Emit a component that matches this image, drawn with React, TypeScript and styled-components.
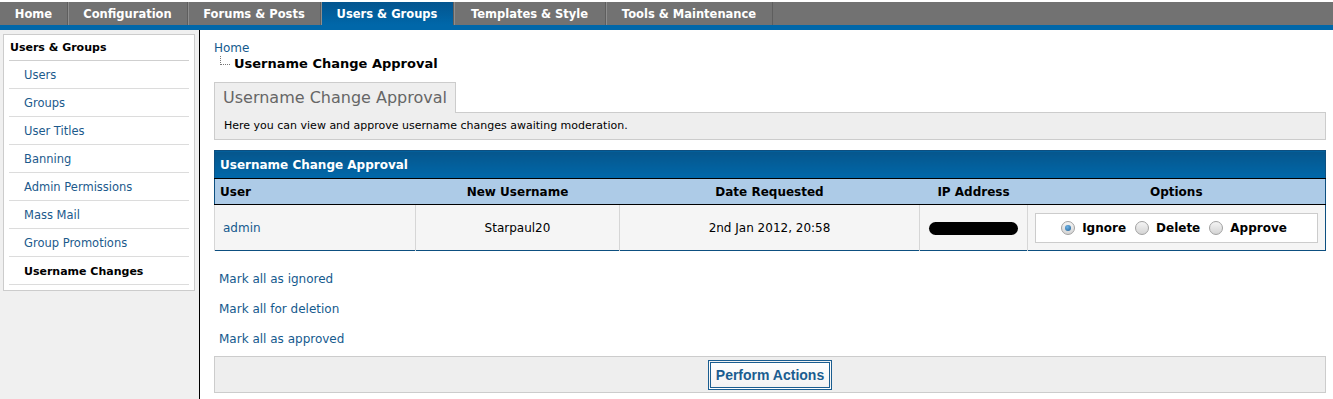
import React, { useState } from 'react';
import styled, { createGlobalStyle } from 'styled-components';

type Choice = 'ignore' | 'delete' | 'approve';

const navItems = [
  { label: 'Home', width: 68 },
  { label: 'Configuration', width: 120 },
  { label: 'Forums & Posts', width: 133 },
  { label: 'Users & Groups', width: 133 },
  { label: 'Templates & Style', width: 152 },
  { label: 'Tools & Maintenance', width: 167 },
];

const sideItems = [
  'Users',
  'Groups',
  'User Titles',
  'Banning',
  'Admin Permissions',
  'Mass Mail',
  'Group Promotions',
  'Username Changes',
];

const App: React.FC = () => {
  const [choice, setChoice] = useState<Choice>('ignore');

  return (
    <>
      <GlobalStyle />
      <TopNav>
        {navItems.map((item) => (
          <NavTab key={item.label} $width={item.width} $active={item.label === 'Users & Groups'}>
            {item.label}
          </NavTab>
        ))}
      </TopNav>
      <Page>
        <Sidebar>
          <SideBox>
            <SideHeader>Users &amp; Groups</SideHeader>
            {sideItems.map((item) => (
              <SideItem key={item} $active={item === 'Username Changes'}>
                {item}
              </SideItem>
            ))}
          </SideBox>
        </Sidebar>

        <Main>
          <Breadcrumb>
            <Link href="#">Home</Link>
            <CurrentCrumb>
              <TreeLine />
              Username Change Approval
            </CurrentCrumb>
          </Breadcrumb>

          <TabRow>
            <TitleTab>Username Change Approval</TitleTab>
            <TabFiller />
          </TabRow>
          <Description>Here you can view and approve username changes awaiting moderation.</Description>

          <Table>
            <colgroup>
              <col style={{ width: 201 }} />
              <col style={{ width: 204 }} />
              <col style={{ width: 300 }} />
              <col style={{ width: 108 }} />
              <col />
            </colgroup>
            <thead>
              <tr>
                <TableTitle colSpan={5}>Username Change Approval</TableTitle>
              </tr>
              <tr>
                <ColHead $align="left">User</ColHead>
                <ColHead>New Username</ColHead>
                <ColHead>Date Requested</ColHead>
                <ColHead>IP Address</ColHead>
                <ColHead>Options</ColHead>
              </tr>
            </thead>
            <tbody>
              <tr>
                <Cell $align="left">
                  <Link href="#">admin</Link>
                </Cell>
                <Cell>Starpaul20</Cell>
                <Cell>2nd Jan 2012, 20:58</Cell>
                <Cell>
                  <Redacted />
                </Cell>
                <OptionCell>
                  <OptionBox>
                    <Option onClick={() => setChoice('ignore')}>
                      <Radio $checked={choice === 'ignore'} />
                      Ignore
                    </Option>
                    <Option onClick={() => setChoice('delete')}>
                      <Radio $checked={choice === 'delete'} />
                      Delete
                    </Option>
                    <Option onClick={() => setChoice('approve')}>
                      <Radio $checked={choice === 'approve'} />
                      Approve
                    </Option>
                  </OptionBox>
                </OptionCell>
              </tr>
            </tbody>
          </Table>

          <MarkLinks>
            <MarkLink href="#">Mark all as ignored</MarkLink>
            <MarkLink href="#">Mark all for deletion</MarkLink>
            <MarkLink href="#">Mark all as approved</MarkLink>
          </MarkLinks>

          <ButtonBar>
            <SubmitButton type="button">Perform Actions</SubmitButton>
          </ButtonBar>
        </Main>
      </Page>
    </>
  );
};

const GlobalStyle = createGlobalStyle`
  html, body {
    margin: 0;
    padding: 0;
    background: #fff;
  }

  body {
    font-family: "DejaVu Sans", Verdana, sans-serif;
    font-size: 12px;
    color: #000;
  }
`;

const TopNav = styled.div`
  display: flex;
  margin-top: 2px;
  height: 23px;
  background: #727272;
  border-bottom: 5px solid #0067a9;
`;

const NavTab = styled.div<{ $active?: boolean; $width: number }>`
  display: flex;
  align-items: center;
  justify-content: center;
  box-sizing: border-box;
  width: ${(p) => p.$width}px;
  color: #fff;
  font-size: 11.5px;
  font-weight: bold;
  white-space: nowrap;
  cursor: pointer;
  border-right: 1px solid #5e5e5e;
  box-shadow: inset 1px 0 0 #8e8e8e;
  background: ${(p) => (p.$active ? 'linear-gradient(#03558f, #0067a9)' : 'transparent')};

  &:first-child {
    box-shadow: none;
  }
`;

const Page = styled.div`
  display: flex;
  min-height: calc(100vh - 30px);
`;

const Sidebar = styled.div`
  width: 196px;
  flex-shrink: 0;
  padding: 4px 0 0 3px;
  background: #f0f0f0;
  border-right: 1px solid #000;
`;

const SideBox = styled.div`
  width: 180px;
  padding: 0 5px 5px;
  background: #fff;
  border: 1px solid #ccc;
`;

const SideHeader = styled.div`
  height: 24px;
  line-height: 24px;
  padding: 1px 0 0 1px;
  font-size: 11px;
  font-weight: bold;
  border-bottom: 1px solid #cfcfcf;
`;

const SideItem = styled.div<{ $active?: boolean }>`
  height: 25px;
  line-height: 25px;
  padding: 2px 0 0 15px;
  font-size: ${(p) => (p.$active ? '11px' : '11.5px')};
  font-weight: ${(p) => (p.$active ? 'bold' : 'normal')};
  color: ${(p) => (p.$active ? '#000' : '#1c5a8c')};
  border-bottom: 1px solid #dcdcdc;
  cursor: pointer;
`;

const Main = styled.div`
  flex: 1;
  min-width: 0;
  padding: 10px 7px 0 14px;
`;

const Link = styled.a`
  color: #155a8e;
  text-decoration: none;
`;

const Breadcrumb = styled.div`
  line-height: 16px;
`;

const CurrentCrumb = styled.div`
  display: flex;
  align-items: flex-start;
  padding-left: 6px;
  font-size: 13px;
  font-weight: bold;
`;

const TreeLine = styled.span`
  width: 9px;
  height: 8px;
  margin: 0 4px 0 0;
  border-left: 1px dotted #777;
  border-bottom: 1px dotted #777;
`;

const TabRow = styled.div`
  display: flex;
  margin-top: 10px;
`;

const TitleTab = styled.div`
  height: 30px;
  line-height: 30px;
  padding: 0 8px;
  font-size: 16px;
  color: #666;
  background: #eee;
  border: 1px solid #ccc;
  border-bottom: none;
`;

const TabFiller = styled.div`
  flex: 1;
  border-bottom: 1px solid #ccc;
`;

const Description = styled.div`
  height: 26px;
  line-height: 26px;
  padding-left: 9px;
  font-size: 11px;
  background: #eee;
  border: 1px solid #ccc;
  border-top: none;
`;

const Table = styled.table`
  width: 100%;
  margin-top: 10px;
  border-collapse: collapse;
  border: 1px solid #0d4f80;
  table-layout: fixed;
`;

const TableTitle = styled.th`
  height: 27px;
  padding: 0 5px;
  text-align: left;
  color: #fff;
  font-size: 12px;
  background: linear-gradient(#06568c, #0068aa);
  border-bottom: 1px solid #000;
`;

const ColHead = styled.th<{ $align?: 'left' | 'center' }>`
  height: 25px;
  padding: 0 5px;
  text-align: ${(p) => p.$align || 'center'};
  font-size: 12px;
  background: #adcbe7;
  border-bottom: 1px solid #000;
`;

const Cell = styled.td<{ $align?: 'left' | 'center' }>`
  height: 45px;
  padding: 0 ${(p) => (p.$align === 'left' ? '8px' : '4px')};
  text-align: ${(p) => p.$align || 'center'};
  background: #f5f5f5;
  border-left: 1px solid #d6d6d6;
`;

const OptionCell = styled(Cell)`
  padding: 0 7px;
`;

const Redacted = styled.span`
  display: inline-block;
  width: 89px;
  height: 13px;
  margin-top: 2px;
  vertical-align: middle;
  background: #000;
  border-radius: 7px;
`;

const OptionBox = styled.div`
  display: flex;
  align-items: center;
  justify-content: center;
  height: 28px;
  padding-right: 5px;
  background: #fff;
  border: 1px solid #ccc;
`;

const Option = styled.label`
  display: flex;
  align-items: center;
  margin-right: 9px;
  font-weight: bold;
  cursor: pointer;

  &:last-child {
    margin-right: 0;
  }
`;

const Radio = styled.span<{ $checked?: boolean }>`
  position: relative;
  width: 12px;
  height: 12px;
  margin-right: 7px;
  border: 1px solid #a2a2a2;
  border-radius: 50%;
  background: linear-gradient(#f4f4f4, #d4d4d4);

  &::after {
    content: '';
    display: ${(p) => (p.$checked ? 'block' : 'none')};
    position: absolute;
    left: 3px;
    top: 3px;
    width: 6px;
    height: 6px;
    border-radius: 50%;
    background: radial-gradient(circle at 40% 35%, #6fb3e6, #1d5f95);
  }
`;

const MarkLinks = styled.div`
  display: flex;
  flex-direction: column;
  margin-top: 13px;
`;

const MarkLink = styled(Link)`
  height: 30px;
  line-height: 30px;
  padding-left: 5px;
`;

const ButtonBar = styled.div`
  display: flex;
  align-items: center;
  justify-content: center;
  height: 35px;
  margin-top: 2px;
  background: #eee;
  border: 1px solid #ccc;
`;

const SubmitButton = styled.button`
  height: 30px;
  padding: 0 5px;
  font-family: "Liberation Sans", Arial, sans-serif;
  font-size: 14px;
  font-weight: bold;
  color: #1a5d90;
  background: linear-gradient(#fff, #f2f2f2);
  border: 3px double #1a5d90;
  cursor: pointer;
`;

export default App;
